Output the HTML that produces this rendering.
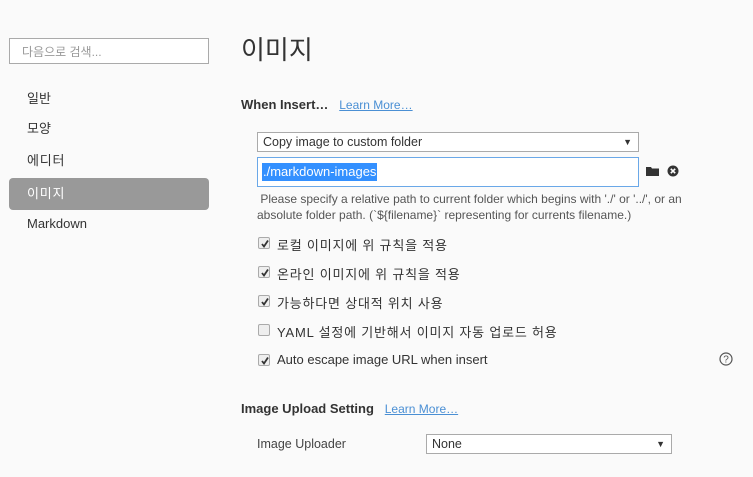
<!DOCTYPE html>
<html><head><meta charset="utf-8"><style>
*{margin:0;padding:0;box-sizing:border-box}
body{width:753px;height:477px;background:#fafafa;font-family:"Liberation Sans","Noto Sans CJK KR",sans-serif;color:#333;position:relative;overflow:hidden}
.a{position:absolute;white-space:nowrap}
.nav{left:27px;font-size:13px;color:#333}
.cb{position:absolute;left:258px;width:12px;height:12px;border:1px solid #aaa;border-radius:2px;background:#eee}
.cb svg{position:absolute;left:1px;top:1px}
.lbl{left:277px;font-size:13px;color:#333}
.k{letter-spacing:0.8px}
.sel{position:absolute;border:1px solid #aaa;background:#fff;font-size:12.5px;padding-left:5px;line-height:18px}
.sel:after{content:"▼";position:absolute;right:6px;top:0;font-size:9px}
.link{color:#4a8fd4;text-decoration:underline;font-size:12px;font-weight:normal}
</style></head><body>
<div class="a" style="left:9px;top:38px;width:200px;height:26px;border:1px solid #aaa;background:#fff;font-size:12px;color:#999;padding:4px 0 0 12px">다음으로 검색...</div>
<div class="a nav" style="top:88px">일반</div>
<div class="a nav" style="top:118px">모양</div>
<div class="a nav k" style="top:150px">에디터</div>
<div class="a" style="left:9px;top:178px;width:200px;height:32px;background:#999;border-radius:4px"></div>
<div class="a nav k" style="top:183px;color:#fff">이미지</div>
<div class="a nav" style="top:216px">Markdown</div>
<div class="a" style="left:241px;top:30px;font-size:26px;color:#333">이미지</div>
<div class="a" style="left:241px;top:97px;font-size:13px;font-weight:bold">When Insert…&nbsp;&nbsp; <span class="link">Learn More…</span></div>
<div class="sel" style="left:257px;top:132px;width:382px;height:20px">Copy image to custom folder</div>
<div class="a" style="left:257px;top:157px;width:382px;height:30px;border:1px solid #6aa8e8;background:#fff"></div>
<div class="a" style="left:262px;top:163px;height:18px;background:#3390ff;color:#fff;font-size:13px;line-height:18px;padding:0 1px">./markdown-images</div>
<svg class="a" style="left:646px;top:166px" width="13" height="10" viewBox="0 0 13 10"><path d="M0 1h5l1 1.5h7V10H0z" fill="#333"/></svg>
<svg class="a" style="left:667px;top:165px" width="12" height="12" viewBox="0 0 12 12"><circle cx="6" cy="6" r="5.5" fill="#333"/><path d="M3.8 3.8l4.4 4.4M8.2 3.8l-4.4 4.4" stroke="#fff" stroke-width="1.6"/></svg>
<div class="a" style="left:257px;top:191px;font-size:12px;color:#555;line-height:16px">&nbsp;Please specify a relative path to current folder which begins with './' or '../', or an<br>absolute folder path. (`${filename}` representing for currents filename.)</div>
<div class="cb" style="top:237px"><svg width="10" height="10"><path d="M2 5l2 2.5 4-6" stroke="#333" stroke-width="1.8" fill="none"/></svg></div>
<div class="a lbl k" style="top:235px">로컬 이미지에 위 규칙을 적용</div>
<div class="cb" style="top:266px"><svg width="10" height="10"><path d="M2 5l2 2.5 4-6" stroke="#333" stroke-width="1.8" fill="none"/></svg></div>
<div class="a lbl k" style="top:264px">온라인 이미지에 위 규칙을 적용</div>
<div class="cb" style="top:295px"><svg width="10" height="10"><path d="M2 5l2 2.5 4-6" stroke="#333" stroke-width="1.8" fill="none"/></svg></div>
<div class="a lbl k" style="top:293px">가능하다면 상대적 위치 사용</div>
<div class="cb" style="top:324px"></div>
<div class="a lbl k" style="top:322px">YAML 설정에 기반해서 이미지 자동 업로드 허용</div>
<div class="cb" style="top:354px"><svg width="10" height="10"><path d="M2 5l2 2.5 4-6" stroke="#333" stroke-width="1.8" fill="none"/></svg></div>
<div class="a lbl" style="top:352px">Auto escape image URL when insert</div>
<svg class="a" style="left:719px;top:352px" width="14" height="14" viewBox="0 0 14 14"><circle cx="7" cy="7" r="6" fill="none" stroke="#555" stroke-width="1.2"/><text x="7" y="10.5" font-size="10" text-anchor="middle" fill="#555" font-family="Liberation Sans">?</text></svg>
<div class="a" style="left:241px;top:401px;font-size:13px;font-weight:bold">Image Upload Setting&nbsp;&nbsp; <span class="link">Learn More…</span></div>
<div class="a" style="left:257px;top:437px;font-size:12.5px;color:#444">Image Uploader</div>
<div class="sel" style="left:426px;top:434px;width:246px;height:20px">None</div>
</body></html>
